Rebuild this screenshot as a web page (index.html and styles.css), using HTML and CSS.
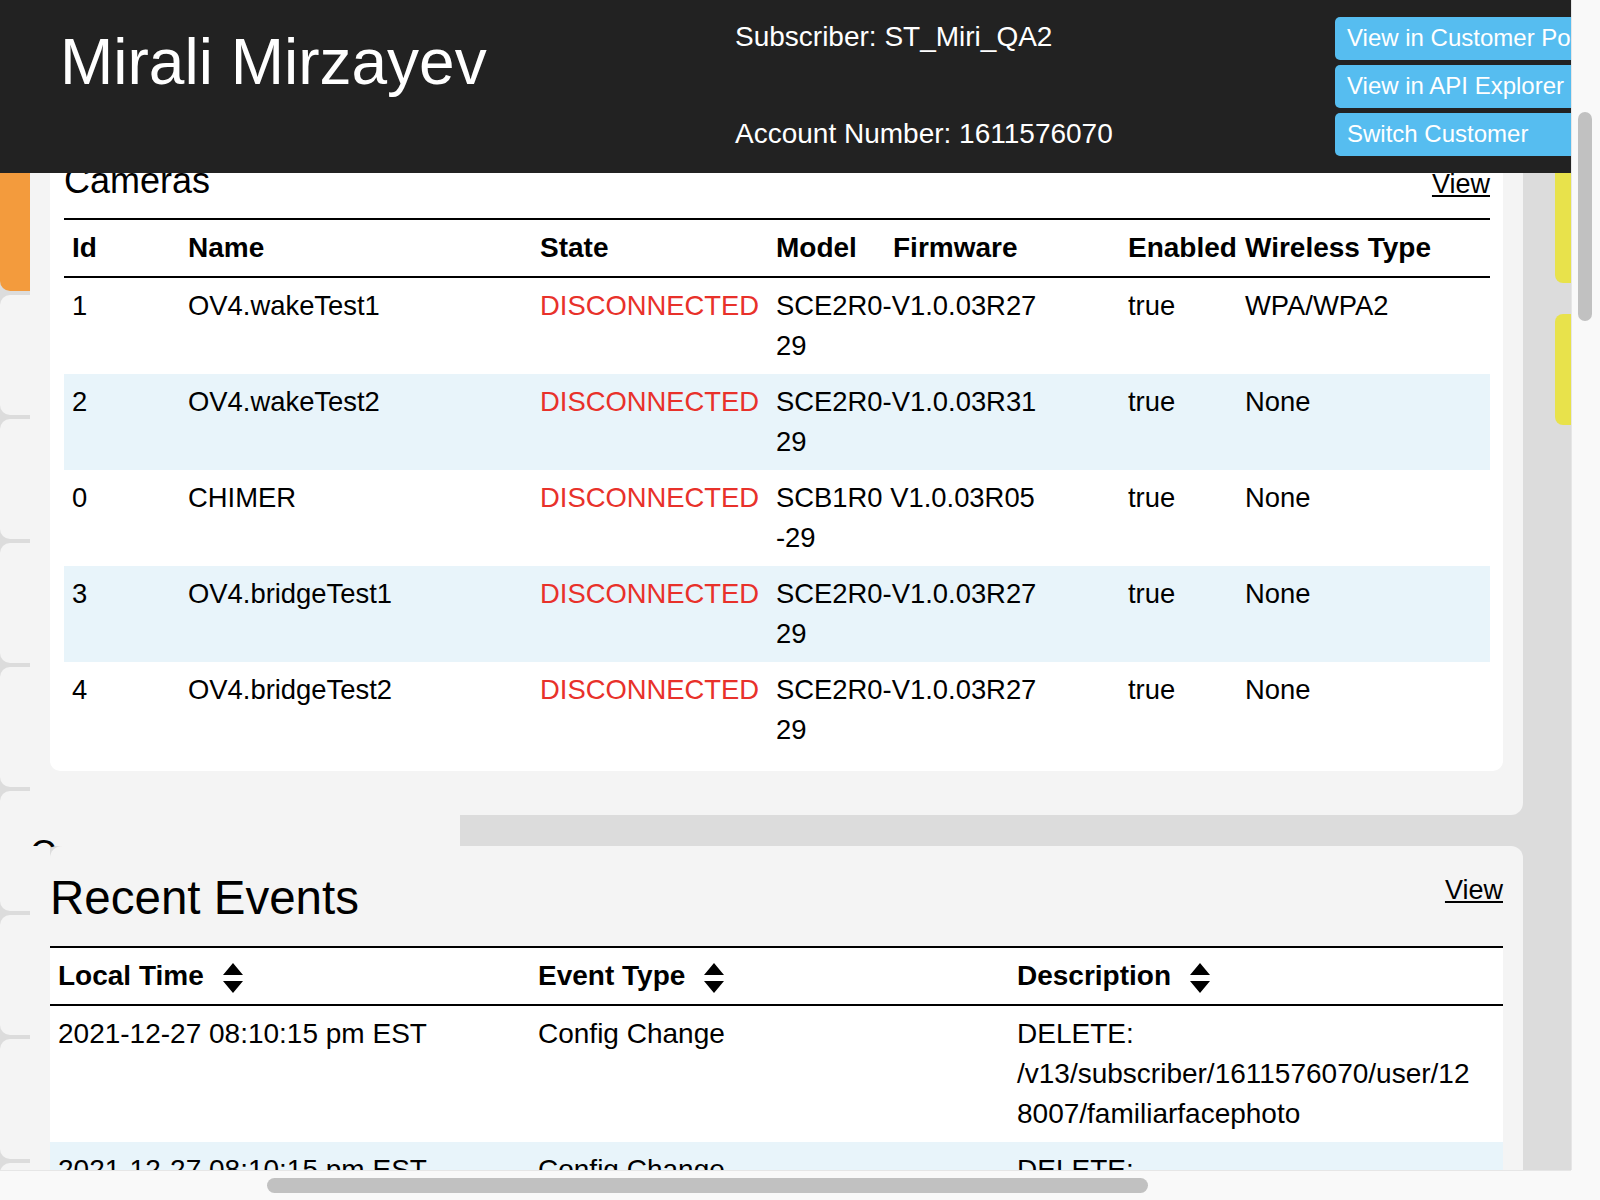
FILE: index.html
```html
<!DOCTYPE html>
<html lang="en">
<head>
<meta charset="utf-8">
<title>Mirali Mirzayev</title>
<link rel="stylesheet" href="styles.css">
</head>
<body>
<div class="screen">
  <div class="viewport">
    <header class="topbar">
      <h1 class="cust-name">Mirali Mirzayev</h1>
      <div class="cust-info">
        <div class="info-line">Subscriber: ST_Miri_QA2</div>
        <div class="info-line info-acct">Account Number: 1611576070</div>
      </div>
      <div class="cust-actions">
        <a class="btn" href="#">View in Customer Portal</a>
        <a class="btn" href="#">View in API Explorer</a>
        <a class="btn" href="#">Switch Customer</a>
      </div>
    </header>

    <div class="layout">
      <nav class="side-tabs">
        <div class="tab tab-active"></div>
        <div class="tab"></div>
        <div class="tab"></div>
        <div class="tab"></div>
        <div class="tab"></div>
        <div class="tab"></div>
        <div class="tab"></div>
        <div class="tab"></div>
        <div class="tab"></div>
      </nav>

      <main class="main">
        <section class="cams-wrap">
          <div class="card cams-card">
            <div class="card-head">
              <h2 class="card-title">Cameras</h2>
              <a class="view-link" href="#">View</a>
            </div>
            <table class="grid cams-grid">
              <colgroup>
                <col class="c-id"><col class="c-name"><col class="c-state"><col class="c-model"><col class="c-fw"><col class="c-en"><col class="c-wl">
              </colgroup>
              <thead>
                <tr><th>Id</th><th>Name</th><th>State</th><th>Model</th><th>Firmware</th><th>Enabled</th><th>Wireless Type</th></tr>
              </thead>
              <tbody>
                <tr><td>1</td><td>OV4.wakeTest1</td><td class="state-bad">DISCONNECTED</td><td colspan="2">SCE2R0-V1.0.03R27<br>29</td><td>true</td><td>WPA/WPA2</td></tr>
                <tr class="alt"><td>2</td><td>OV4.wakeTest2</td><td class="state-bad">DISCONNECTED</td><td colspan="2">SCE2R0-V1.0.03R31<br>29</td><td>true</td><td>None</td></tr>
                <tr><td>0</td><td>CHIMER</td><td class="state-bad">DISCONNECTED</td><td colspan="2">SCB1R0 V1.0.03R05<br>-29</td><td>true</td><td>None</td></tr>
                <tr class="alt"><td>3</td><td>OV4.bridgeTest1</td><td class="state-bad">DISCONNECTED</td><td colspan="2">SCE2R0-V1.0.03R27<br>29</td><td>true</td><td>None</td></tr>
                <tr><td>4</td><td>OV4.bridgeTest2</td><td class="state-bad">DISCONNECTED</td><td colspan="2">SCE2R0-V1.0.03R27<br>29</td><td>true</td><td>None</td></tr>
              </tbody>
            </table>
          </div>
        </section>

        <div class="band">
          <div class="band-light">
            <div class="ghost-clip"><span class="ghost-title">Cameras</span></div>
          </div>
        </div>

        <div class="events-row">
          <div class="events-strip"></div>
          <section class="events-card">
            <div class="events-head">
              <h2 class="events-title">Recent Events</h2>
              <a class="view-link events-view" href="#">View</a>
            </div>
            <table class="grid events-grid">
              <colgroup><col class="e-time"><col class="e-type"><col class="e-desc"></colgroup>
              <thead>
                <tr>
                  <th>Local Time <svg class="sort" viewBox="0 0 20 30" width="20" height="30"><path d="M10 0 L20 12 L0 12 Z M0 18 L20 18 L10 30 Z"/></svg></th>
                  <th>Event Type <svg class="sort" viewBox="0 0 20 30" width="20" height="30"><path d="M10 0 L20 12 L0 12 Z M0 18 L20 18 L10 30 Z"/></svg></th>
                  <th>Description <svg class="sort" viewBox="0 0 20 30" width="20" height="30"><path d="M10 0 L20 12 L0 12 Z M0 18 L20 18 L10 30 Z"/></svg></th>
                </tr>
              </thead>
              <tbody>
                <tr><td>2021-12-27 08:10:15 pm EST</td><td>Config Change</td><td class="desc">DELETE:<br>/v13/subscriber/1611576070/user/12<br>8007/familiarfacephoto</td></tr>
                <tr class="alt"><td>2021-12-27 08:10:15 pm EST</td><td>Config Change</td><td class="desc">DELETE:<br>/v13/subscriber/1611576070/user/12<br>8007/familiarfacephoto</td></tr>
              </tbody>
            </table>
          </section>
        </div>
      </main>

      <aside class="rail">
        <div class="rail-tab rail-tab-1"></div>
        <div class="rail-tab rail-tab-2"></div>
      </aside>
    </div>
  </div>
  <div class="vscroll"><div class="vthumb"></div></div>
  <div class="hscroll"><div class="hthumb"></div></div>
  <div class="corner"></div>
</div>
</body>
</html>
```

FILE: styles.css
```css
* { box-sizing: border-box; }
html, body { margin: 0; padding: 0; }
body {
  width: 1600px;
  height: 1200px;
  overflow: hidden;
  background: #dcdcdc;
  font-family: "Liberation Sans", Arial, Helvetica, sans-serif;
  color: #000;
}
.screen {
  display: grid;
  grid-template-columns: 1571px 29px;
  grid-template-rows: 1170px 30px;
  width: 1600px;
  height: 1200px;
}
.viewport { position: relative; overflow: hidden; background: #dcdcdc; }

/* header */
.topbar {
  position: absolute;
  top: 0; left: 0; right: 0;
  height: 173px;
  background: #222;
  color: #fff;
  display: flex;
  overflow: hidden;
  z-index: 5;
}
.cust-name {
  margin: 0;
  width: 735px;
  flex: none;
  padding: 30px 0 0 60px;
  font-size: 64px;
  line-height: 64px;
  font-weight: 400;
  white-space: nowrap;
}
.cust-info { width: 600px; flex: none; padding-top: 17px; font-size: 28px; line-height: 40px; white-space: nowrap; }
.info-acct { margin-top: 57px; }
.cust-actions { flex: none; display: flex; flex-direction: column; gap: 5px; padding-top: 17px; }
.btn {
  display: block;
  width: 260px;
  height: 43px;
  background: #56bdf0;
  color: #fff;
  border-radius: 5px;
  padding-left: 12px;
  font-size: 24px;
  line-height: 42px;
  text-decoration: none;
  white-space: nowrap;
  overflow: hidden;
}

/* layout */
.layout { display: flex; padding-top: 100px; height: 100%; }
.side-tabs { width: 30px; flex: none; display: flex; flex-direction: column; gap: 4px; }
.tab { height: 120px; flex: none; background: #f4f4f4; border-radius: 10px 0 0 10px; }
.tab-active { height: 191px; background: #f39b3d; }
.main { flex: 1; min-width: 0; display: flex; flex-direction: column; }
.rail { width: 48px; flex: none; display: flex; flex-direction: column; align-items: flex-end; }
.rail-tab { width: 16px; background: #e8e24b; border-radius: 8px 0 0 8px; }
.rail-tab-1 { height: 183px; }
.rail-tab-2 { height: 111px; margin-top: 31px; }

/* cameras */
.cams-wrap { background: #f4f4f4; padding: 0 20px 44px; border-radius: 0 0 12px 0; }
.card { background: #fff; }
.cams-card { padding: 0 13px 13px 14px; border-radius: 0 0 10px 10px; }
.card-head { display: flex; justify-content: space-between; align-items: baseline; }
.card-title { margin: 56px 0 0; font-size: 36px; line-height: 50px; font-weight: 400; }
.view-link { color: #000; font-size: 27px; line-height: 40px; text-decoration: underline; }

.grid {
  border-collapse: separate;
  border-spacing: 0;
  width: 100%;
  table-layout: fixed;
  font-size: 27.4px;
  line-height: 40px;
  background: #fff;
}
.grid th {
  text-align: left;
  font-weight: 700;
  font-size: 28px;
  padding: 8px;
  border-top: 2px solid #000;
  border-bottom: 2px solid #000;
  vertical-align: top;
  white-space: nowrap;
}
.grid td { padding: 8px; vertical-align: top; white-space: nowrap; }
.grid tr.alt td { background: #e8f4fa; }
.cams-grid { margin-top: 12px; }
.c-id { width: 116px; }
.c-name { width: 352px; }
.c-state { width: 236px; }
.c-model { width: 117px; }
.c-fw { width: 235px; }
.c-en { width: 117px; }
.c-wl { width: 253px; }
.state-bad { color: #e8312a; }

/* band between sections */
.band { height: 31px; flex: none; display: flex; }
.band-light { width: 430px; background: #f4f4f4; }
.ghost-clip { height: 35px; overflow: hidden; padding-top: 21px; }
.ghost-title { display: block; font-size: 36px; line-height: 36px; }

/* events */
.events-row { flex: 1; display: flex; }
.events-strip { width: 20px; flex: none; background: #f4f4f4; }
.events-card { flex: 1; background: #f4f4f4; border-radius: 12px 12px 0 0; padding-right: 20px; }
.events-head { display: flex; justify-content: space-between; align-items: flex-start; }
.events-title { margin: 19px 0 0; font-size: 47.5px; line-height: 66px; font-weight: 400; }
.events-view { margin-top: 24px; }
.events-grid { margin-top: 15px; font-size: 28px; }
.e-time { width: 480px; }
.e-type { width: 479px; }
.e-desc { width: 494px; }
.sort { vertical-align: middle; margin-left: 11px; fill: #000; }

/* scrollbars */
.vscroll { background: #f9f9f9; border-left: 1px solid #e6e6e6; padding: 112px 0 0 6px; }
.vthumb { width: 14px; height: 209px; border-radius: 7px; background: #c1c1c1; }
.hscroll { background: #f9f9f9; border-top: 1px solid #e6e6e6; padding: 7px 0 0 267px; }
.hthumb { width: 881px; height: 15px; border-radius: 8px; background: #c1c1c1; }
.corner { background: #f9f9f9; }
```
